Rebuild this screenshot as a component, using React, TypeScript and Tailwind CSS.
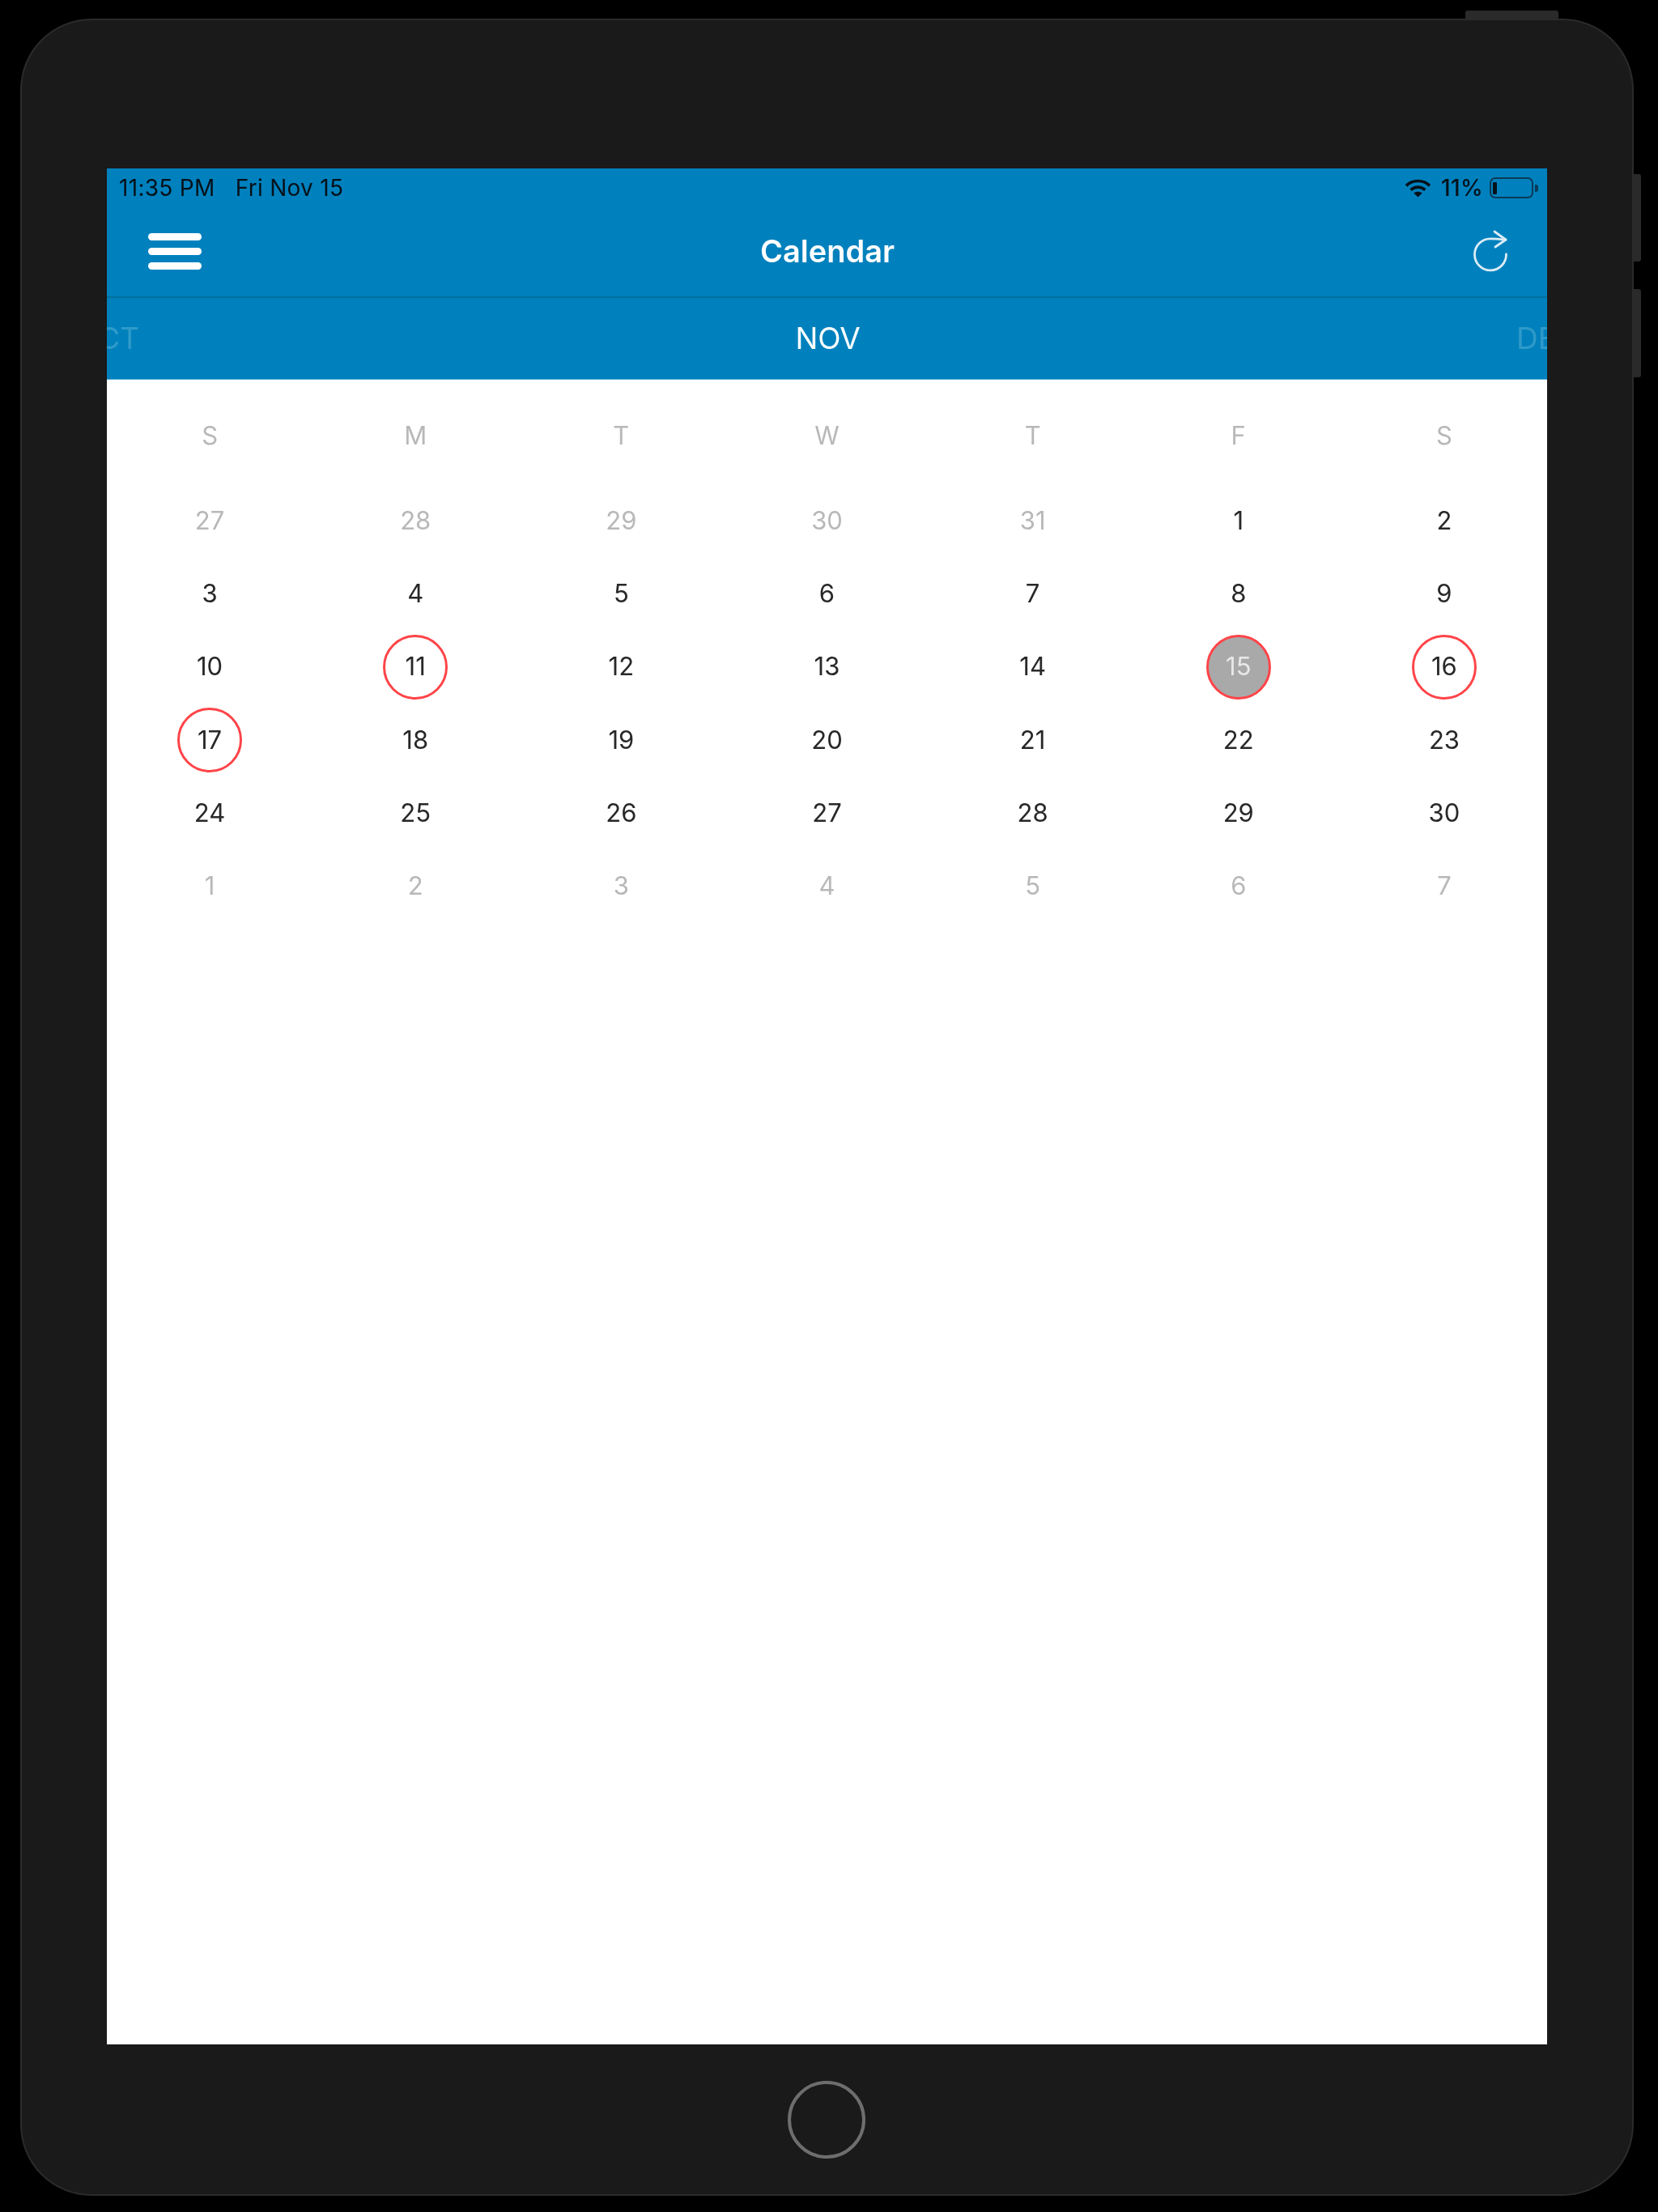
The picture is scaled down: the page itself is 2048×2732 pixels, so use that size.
const font = "font-['Inter','Liberation_Sans',sans-serif]";

const weekdays = ["S", "M", "T", "W", "T", "F", "S"];

// muted = outside the month, ring = has events, today = filled
type Day = { n: number; muted?: boolean; ring?: boolean; today?: boolean };

const days: Day[] = [
  { n: 27, muted: true },
  { n: 28, muted: true },
  { n: 29, muted: true },
  { n: 30, muted: true },
  { n: 31, muted: true },
  { n: 1 },
  { n: 2 },
  { n: 3 },
  { n: 4 },
  { n: 5 },
  { n: 6 },
  { n: 7 },
  { n: 8 },
  { n: 9 },
  { n: 10 },
  { n: 11, ring: true },
  { n: 12 },
  { n: 13 },
  { n: 14 },
  { n: 15, ring: true, today: true },
  { n: 16, ring: true },
  { n: 17, ring: true },
  { n: 18 },
  { n: 19 },
  { n: 20 },
  { n: 21 },
  { n: 22 },
  { n: 23 },
  { n: 24 },
  { n: 25 },
  { n: 26 },
  { n: 27 },
  { n: 28 },
  { n: 29 },
  { n: 30 },
  { n: 1, muted: true },
  { n: 2, muted: true },
  { n: 3, muted: true },
  { n: 4, muted: true },
  { n: 5, muted: true },
  { n: 6, muted: true },
  { n: 7, muted: true },
];

function WifiIcon() {
  return (
    <svg width="33" height="23" viewBox="0 0 33 23" fill="none" stroke="#05111a" strokeWidth="3.6">
      <path d="M2 8.4C10 .6 23 .6 31 8.4" />
      <path d="M7.6 13.6C12.8 8.9 20.2 8.9 25.4 13.6" />
      <path d="M16.5 22.5L11.2 17.6C14.4 15.2 18.6 15.2 21.8 17.6Z" fill="#05111a" stroke="none" />
    </svg>
  );
}

function BatteryIcon() {
  return (
    <div className="flex items-center">
      <div className="flex h-[26px] w-[54px] items-center rounded-[7px] border-2 border-[#0a3a58] px-[2px]">
        <div className="h-[15px] w-[5px] rounded-[1px] bg-[#05111a]" />
      </div>
      <div className="ml-[2px] h-[9px] w-[4px] rounded-r-[3px] bg-[#0a3a58]" />
    </div>
  );
}

function RefreshIcon() {
  return (
    <svg width="50" height="60" viewBox="0 0 50 60" fill="none" stroke="#dcecf5" strokeWidth="2.8" strokeLinecap="round" strokeLinejoin="round">
      <path d="M45.5 34A19.5 19.5 0 1 1 26 14.8C33 14.8 39 15.4 45 16" />
      <path d="M31 6L45 16L32 25" />
    </svg>
  );
}

export default function App() {
  return (
    <div className={`h-[2732px] w-[2048px] overflow-hidden bg-black pl-[25px] pt-[13px] ${font}`}>
      {/* Top power button */}
      <div className="ml-[1785px] h-[10px] w-[115px] rounded-t-[3px] bg-[#2a2a2a]" />

      <div className="relative h-[2689px] w-[1993px] rounded-[88px] border-2 border-[#2b2b2b] bg-[#1a1a1a] pl-[105px] pt-[183px]">
        {/* Volume buttons */}
        <div className="absolute -right-[11px] top-[190px] h-[108px] w-[9px] rounded-r-[3px] bg-[#2a2a2a]" />
        <div className="absolute -right-[11px] top-[332px] h-[109px] w-[9px] rounded-r-[3px] bg-[#2a2a2a]" />

        {/* Screen */}
        <div className="h-[2317px] w-[1779px] overflow-hidden bg-white blur-[0.6px]">
          <div className="bg-[#0081bd]">
            {/* Status bar */}
            <div className="flex h-[48px] items-center justify-between pl-[15px] pr-[11px] text-[28px] tracking-[0.3px] text-[#05111a]">
              <div className="flex gap-[25px]">
                <span>11:35 PM</span>
                <span>Fri Nov 15</span>
              </div>
              <div className="flex items-center">
                <WifiIcon />
                <span className="ml-[12px] mr-[8px] font-medium">11%</span>
                <BatteryIcon />
              </div>
            </div>

            {/* Nav bar */}
            <div className="grid h-[112px] grid-cols-[1fr_auto_1fr] items-center border-b-2 border-[#00709f] pb-[2px] pl-[51px] pr-[46px]">
              <div className="flex w-[66px] flex-col gap-[9px]">
                <div className="h-[9px] rounded-full bg-white" />
                <div className="h-[9px] rounded-full bg-white" />
                <div className="h-[9px] rounded-full bg-white" />
              </div>
              <h1 className="-translate-x-[2px] text-[38px] font-semibold text-white">Calendar</h1>
              <div className="flex justify-end">
                <RefreshIcon />
              </div>
            </div>

            {/* Month pager */}
            <div className="overflow-hidden border-b border-[#4fa9d4]">
              <div className="-ml-[39px] -mr-[38px] flex h-[100px] items-center justify-between text-[37px]">
                <span className="text-[#2f9ac9]">OCT</span>
                <span className="text-white">NOV</span>
                <span className="text-[#2f9ac9]">DEC</span>
              </div>
            </div>
          </div>

          {/* Weekday header */}
          <div className="mt-[24px] grid h-[90px] grid-cols-7 items-center text-center text-[31px] text-[#b8b8b8]">
            {weekdays.map((d, i) => (
              <div key={i}>{d}</div>
            ))}
          </div>

          {/* Day grid */}
          <div className="mt-[15px] grid grid-cols-7 auto-rows-[90.3px] text-[31px]">
            {days.map((d, i) => (
              <div key={i} className="flex items-center justify-center">
                <div
                  className={`flex h-[80px] w-[80px] items-center justify-center rounded-full ${d.ring ? "border-[3px] border-[#ff4448]" : ""} ${d.today ? "bg-[#a9a9a9] text-[#e8e8e8]" : d.muted ? "text-[#b8b8b8]" : "text-[#282828]"}`}
                >
                  {d.n}
                </div>
              </div>
            ))}
          </div>
        </div>

        {/* Home button */}
        <div className="ml-[841px] mt-[45px] h-[96px] w-[96px] rounded-full border-[4px] border-[#6e6e6e]" />
      </div>
    </div>
  );
}
